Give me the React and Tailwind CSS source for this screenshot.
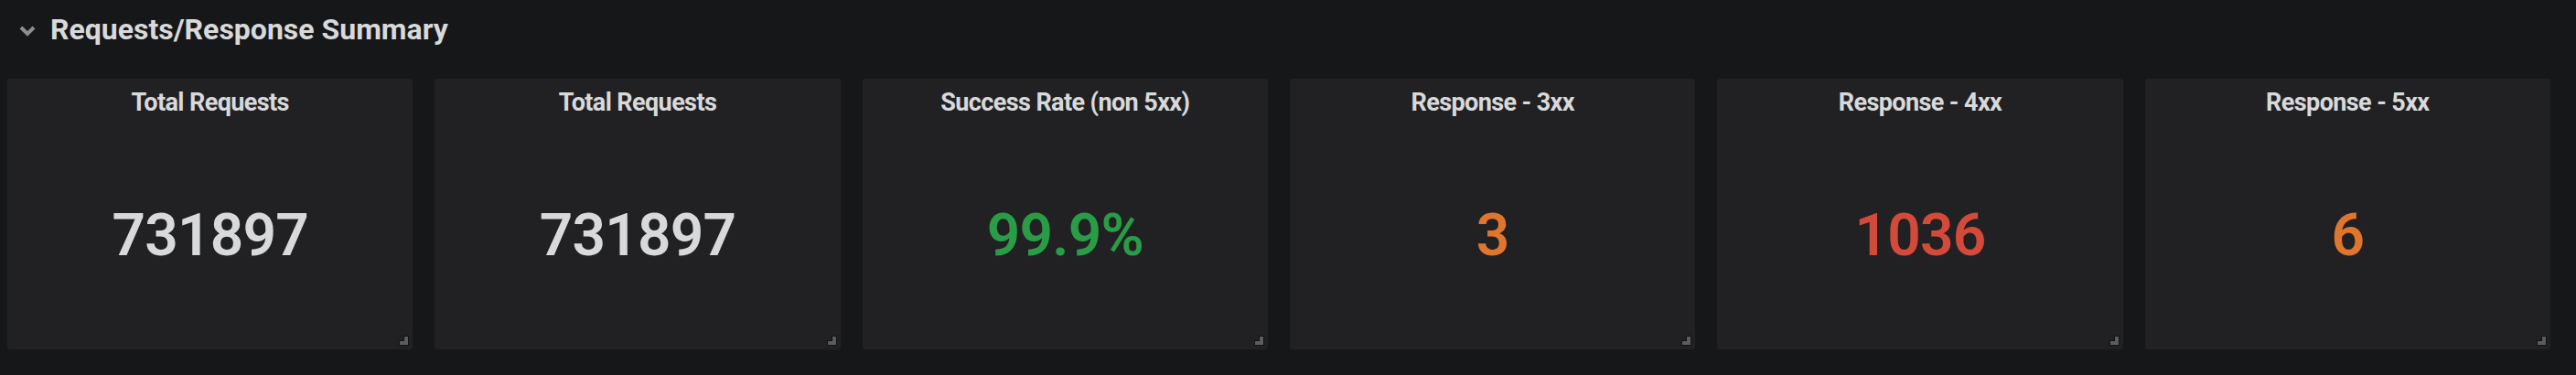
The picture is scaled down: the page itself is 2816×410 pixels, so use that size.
import React from 'react'

const PANELS = [
  { title: 'Total Requests',        value: '731897', color: 'text-[#d8d9da]' },
  { title: 'Total Requests',        value: '731897', color: 'text-[#d8d9da]' },
  { title: 'Success Rate (non 5xx)', value: '99.9%',  color: 'text-[#299c46]' },
  { title: 'Response - 3xx',        value: '3',      color: 'text-[#e0752d]' },
  { title: 'Response - 4xx',        value: '1036',   color: 'text-[#d44a3a]' },
  { title: 'Response - 5xx',        value: '6',      color: 'text-[#e0752d]' },
]

function ResizeHandle() {
  return (
    <svg className="absolute right-[4px] bottom-[4px]" width="11" height="11" viewBox="0 0 11 11">
      <path d="M5 0h6v11H0V5h5z" fill="#111214" />
      <path d="M6 1h4v9H1V6h5z" fill="#5b5c5e" />
    </svg>
  )
}

function StatPanel({ title, value, color }) {
  return (
    <div className="relative flex-1 flex flex-col h-[296px] rounded-[3px] bg-[#212124]">
      {/* Title */}
      <div className="h-[48px] pt-3 text-center text-[27px] leading-[28px] font-bold tracking-[-0.6px] text-[#d8d9da]">
        {title}
      </div>

      {/* Value */}
      <div className="flex-1 flex items-center justify-center">
        <span className={`text-[64px] leading-[66px] font-semibold tracking-[-0.8px] ${color}`}>{value}</span>
      </div>

      <ResizeHandle />
    </div>
  )
}

export default function App() {
  return (
    <div
      className="w-[2816px] h-[410px] bg-[#161719] overflow-hidden"
      style={{ fontFamily: 'Roboto, "Liberation Sans", sans-serif' }}
    >
      {/* Row header */}
      <div className="h-[86px] flex items-start pt-[14px] pl-[21px]">
        <div className="flex items-center gap-[16px]">
          <svg width="18" height="12" viewBox="0 0 18 12" className="mt-[4px]">
            <path d="M2 2l7 7 7-7" fill="none" stroke="#8e8e8e" strokeWidth="4" />
          </svg>
          <span className="text-[32px] leading-[36px] font-bold text-[#d8d9da]">
            Requests/Response Summary
          </span>
        </div>
      </div>

      {/* Stat panels */}
      <div className="flex gap-6 pl-2 pr-[28px]">
        {PANELS.map((p, i) => (
          <StatPanel key={i} {...p} />
        ))}
      </div>
    </div>
  )
}
